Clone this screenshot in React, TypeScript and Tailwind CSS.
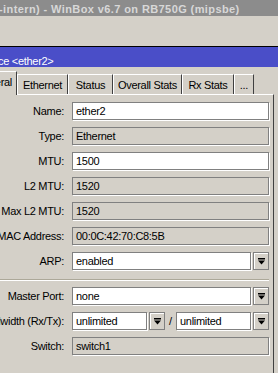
import type { ReactNode } from 'react'

// ── Small pieces ──────────────────────────────────────────────────────────────

function DropIcon() {
  return (
    <svg width="7" height="7" viewBox="0 0 7 7" aria-hidden="true">
      <rect x="0" y="0" width="7" height="1.5" fill="#000" />
      <path d="M0 2.5h7L3.5 6.5z" fill="#000" />
    </svg>
  )
}

function DropButton() {
  return (
    <div className="w-[16px] h-[18px] shrink-0 flex items-center justify-center bg-[#d4d0c8] border border-[#808080] shadow-[inset_1px_1px_0_#ffffff]">
      <DropIcon />
    </div>
  )
}

function Field({
  value,
  width,
  disabled = false,
}: {
  value: string
  width: string
  disabled?: boolean
}) {
  return (
    <div
      className={`${width} h-[18px] shrink-0 flex items-center px-[3px] border border-[#808080] shadow-[1px_1px_0_#ffffff] whitespace-nowrap overflow-hidden ${
        disabled ? 'bg-[#d4d0c8]' : 'bg-white'
      }`}
    >
      {value}
    </div>
  )
}

function Row({ label, children }: { label: string; children: ReactNode }) {
  return (
    <div className="flex items-center h-[18px]">
      <div className="w-[64px] shrink-0 flex justify-end whitespace-nowrap">{label}</div>
      <div className="ml-[8px] flex items-center">{children}</div>
    </div>
  )
}

// ── Tabs ──────────────────────────────────────────────────────────────────────

const tabs = [
  { name: 'Ethernet', w: 'w-[51px]' },
  { name: 'Status', w: 'w-[45px]' },
  { name: 'Overall Stats', w: 'w-[69px]' },
  { name: 'Rx Stats', w: 'w-[52px]' },
  { name: '...', w: 'w-[20px]' },
]

// ── App ───────────────────────────────────────────────────────────────────────

export default function App() {
  return (
    <div className="w-[278px] h-[373px] overflow-hidden bg-[#d4d0c8] text-[11px] leading-[13px] tracking-[-0.3px] text-black font-['Liberation_Sans','Arial',sans-serif]">
      {/* WinBox title bar */}
      <div className="h-[16px] bg-[#8c8c8c] pt-[3px] whitespace-nowrap">
        <span className="ml-[-1px] font-bold tracking-[0.4px] text-[#d8d8d8]">
          -intern) - WinBox v6.7 on RB750G (mipsbe)
        </span>
      </div>

      {/* toolbar area */}
      <div className="h-[30px]" />
      <div className="h-px bg-black" />

      {/* window caption */}
      <div className="h-[20px] bg-[#4a4ec8] pt-[8px] leading-[12px] whitespace-nowrap overflow-hidden text-white">
        <span className="ml-[-31px]">Interface &lt;ether2&gt;</span>
      </div>

      {/* tab strip */}
      <div className="h-[27px] flex items-end">
        <div className="relative z-10 ml-[-33px] w-[50px] h-[24px] mb-[-1px] flex items-center justify-end pr-[4px] pb-[3px] bg-[#d4d0c8] border-t border-l border-r border-t-white border-l-white border-r-[#404040] whitespace-nowrap">
          General
        </div>
        {tabs.map((t) => (
          <div
            key={t.name}
            className={`${t.w} h-[20px] flex items-center justify-center pt-px border-t border-l border-r border-t-white border-l-white border-r-[#404040] whitespace-nowrap`}
          >
            {t.name}
          </div>
        ))}
      </div>

      {/* panel */}
      <div className="w-[274px] h-[279px] border-t border-t-white border-r border-r-[#404040] pt-[7px]">
        <div className="flex flex-col gap-[7px]">
          <Row label="Name:">
            <Field value="ether2" width="w-[197px]" />
          </Row>
          <Row label="Type:">
            <Field value="Ethernet" width="w-[197px]" disabled />
          </Row>
          <Row label="MTU:">
            <Field value="1500" width="w-[197px]" />
          </Row>
          <Row label="L2 MTU:">
            <Field value="1520" width="w-[197px]" disabled />
          </Row>
          <Row label="Max L2 MTU:">
            <Field value="1520" width="w-[197px]" disabled />
          </Row>
          <Row label="MAC Address:">
            <Field value="00:0C:42:70:C8:5B" width="w-[197px]" disabled />
          </Row>
          <Row label="ARP:">
            <Field value="enabled" width="w-[179px]" />
            <div className="ml-[2px]">
              <DropButton />
            </div>
          </Row>
        </div>

        {/* separator */}
        <div className="w-[269px] mt-[9px] mb-[6px] h-[2px] border-t border-t-[#aca899] border-b border-b-white" />

        <div className="flex flex-col gap-[7px]">
          <Row label="Master Port:">
            <Field value="none" width="w-[179px]" />
            <div className="ml-[2px]">
              <DropButton />
            </div>
          </Row>
          <Row label="Bandwidth (Rx/Tx):">
            <Field value="unlimited" width="w-[75px]" />
            <div className="ml-[2px]">
              <DropButton />
            </div>
            <span className="w-[11px] text-center">/</span>
            <Field value="unlimited" width="w-[75px]" />
            <div className="ml-[2px]">
              <DropButton />
            </div>
          </Row>
          <Row label="Switch:">
            <Field value="switch1" width="w-[197px]" disabled />
          </Row>
        </div>
      </div>
    </div>
  )
}
